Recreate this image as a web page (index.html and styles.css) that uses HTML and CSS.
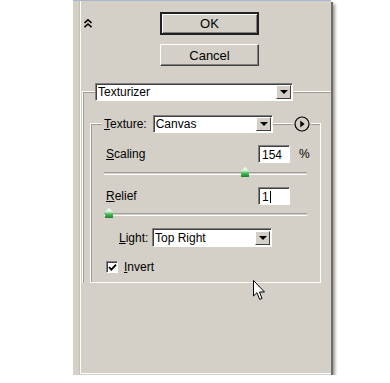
FILE: index.html
```html
<!DOCTYPE html>
<html>
<head>
  <title>Texturizer</title>
  <link rel="stylesheet" href="styles.css">
</head>
<body>
  <div class="window">
    <div class="body">
      <div class="top">
        <span class="collapse">
          <svg width="8" height="9" viewBox="0 0 8 9"><path d="M0.5 4 L4 0.8 L7.5 4 M0.5 8.2 L4 5 L7.5 8.2" fill="none" stroke="#000" stroke-width="1.6"/></svg>
        </span>
        <div class="buttons">
          <button class="btn default">OK</button>
          <button class="btn">Cancel</button>
        </div>
      </div>

      <div class="outer">
        <div class="outer-head">
          <div class="select wide"><span>Texturizer</span><i class="drop"></i></div>
        </div>

        <div class="group">
          <div class="group-head">
            <span class="legend"><u>T</u>exture:</span>
            <div class="select canvas"><span>Canvas</span><i class="drop"></i></div>
            <span class="fill"></span>
            <span class="play">
              <svg width="16" height="16" viewBox="0 0 16 16"><circle cx="8" cy="8" r="7" fill="#d4d0c8" stroke="#000" stroke-width="1.2"/><path d="M6.3 4.6 L10.6 8 L6.3 11.4 Z" fill="#000"/></svg>
            </span>
          </div>

          <div class="row">
            <span class="label"><u>S</u>caling</span>
            <span class="field">154</span>
            <span class="unit">%</span>
          </div>
          <div class="slider">
            <span class="thumb" style="left: 69.5%"></span>
          </div>

          <div class="row second">
            <span class="label"><u>R</u>elief</span>
            <span class="field">1<i class="caret"></i></span>
          </div>
          <div class="slider last">
            <span class="thumb" style="left: 2.5%"></span>
          </div>

          <div class="light">
            <span class="label"><u>L</u>ight:</span>
            <div class="select light-select"><span>Top Right</span><i class="drop"></i></div>
          </div>

          <div class="check">
            <span class="box">
              <svg width="9" height="9" viewBox="0 0 9 9"><path d="M1 4.2 L3.4 6.6 L8 1.6" fill="none" stroke="#000" stroke-width="1.8"/></svg>
            </span>
            <span class="label"><u>I</u>nvert</span>
          </div>
        </div>
      </div>
    </div>

    <svg class="cursor" width="13" height="21" viewBox="0 0 13 21">
      <path d="M0.5 0.5 L0.5 16 L4 12.7 L6.6 19.4 L9 18.4 L6.5 12 L11.5 12 Z" fill="#fff" stroke="#000" stroke-width="1"/>
    </svg>
  </div>
</body>
</html>
```

FILE: styles.css
```css
body { margin: 0; background: #fff; font-family: "Liberation Sans", Arial, sans-serif; font-size: 12px; color: #000; }
u { text-decoration: underline; text-underline-offset: 1px; }

.window { position: relative; margin-left: 73px; width: 258px; height: 375px; background: #d4d0c8; box-shadow: 2px 2px 0 #6e6c68, 4px 4px 3px #9a9892; border-top: 1px solid #a9b6d0; box-sizing: border-box; }
.body { margin-left: 7px; height: 372px; border-left: 1px solid #fff; border-bottom: 1px solid #fff; box-shadow: -1px 0 0 #c4c0b8; }

.top { display: flex; padding-top: 11px; }
.collapse { width: 76px; padding: 5px 0 0 3px; }
.buttons { display: flex; flex-direction: column; gap: 9px; }
.btn { width: 99px; height: 22px; font: inherit; font-size: 13px; background: #d4d0c8; border: 1px solid; border-color: #fff #404040 #404040 #fff; box-shadow: inset -1px -1px 0 #808080; padding: 0; color: #000; }
.btn.default { height: 23px; border: 2px solid #202020; box-shadow: inset 1px 1px 0 #fff, inset -1px -1px 0 #808080; }

.outer { margin: 25px 0 0 1px; border-top: 1px solid #fff; border-left: 1px solid #fff; box-shadow: inset 1px 1px 0 #a09c94; }
.outer-head { display: flex; margin-top: -9px; padding-left: 12px; }

.select { display: flex; height: 18px; box-sizing: border-box; background: #fff; border: 1px solid; border-color: #808080 #fff #fff #808080; box-shadow: inset 1px 1px 0 #404040; align-items: center; }
.select span { flex: 1; padding-left: 2px; }
.select.wide { width: 198px; }
.drop { width: 15px; height: 14px; margin-right: 1px; box-sizing: border-box; background: #d4d0c8; border: 1px solid; border-color: #fff #404040 #404040 #fff; position: relative; }
.drop::after { content: ""; position: absolute; left: 3px; top: 4px; border-left: 4px solid transparent; border-right: 4px solid transparent; border-top: 4px solid #000; }

.group { margin: 22px 0 0 7px; width: 231px; box-sizing: border-box; border: 1px solid #fff; box-shadow: inset 1px 1px 0 #a09c94; padding-bottom: 8px; }
.group-head { display: flex; align-items: center; margin-top: -9px; padding-left: 11px; }
.legend { background: #d4d0c8; padding: 0 6px 0 2px; }
.select.canvas { width: 120px; }
.fill { width: 20px; }
.play { display: flex; background: #d4d0c8; padding: 0 1px; }

.row { display: flex; align-items: center; height: 18px; margin-top: 12px; padding-left: 15px; }
.row .label { width: 152px; }
.field { width: 32px; height: 18px; box-sizing: border-box; background: #fff; border: 1px solid; border-color: #808080 #fff #fff #808080; box-shadow: inset 1px 1px 0 #404040; padding: 1px 0 0 3px; display: flex; align-items: center; }
.caret { display: inline-block; width: 1px; height: 12px; background: #000; margin-left: 1px; }
.unit { margin-left: 9px; }

.slider { position: relative; height: 3px; margin: 9px 13px 0 13px; border-top: 1px solid #a09c94; border-bottom: 1px solid #fff; box-sizing: border-box; }
.slider.last { margin-top: 8px; }
.slider + .row { margin-top: 12px; }
.thumb { position: absolute; top: -6px; width: 8px; height: 10px; margin-left: -4px; background: linear-gradient(#ffffff, #d8f2d8 35%, #4cc05a 60%, #1d7d29); clip-path: polygon(50% 0, 100% 40%, 100% 100%, 0 100%, 0 40%); }

.light { display: flex; align-items: center; margin-top: 12px; padding-left: 28px; }
.light .label { width: 33px; }
.select.light-select { width: 120px; height: 19px; }

.check { display: flex; align-items: center; margin-top: 13px; padding-left: 15px; gap: 6px; }
.box { width: 12px; height: 12px; box-sizing: border-box; background: #fff; border: 1px solid; border-color: #808080 #fff #fff #808080; box-shadow: inset 1px 1px 0 #404040; display: flex; align-items: center; justify-content: center; }

.cursor { position: absolute; left: 180px; top: 279px; }
```
